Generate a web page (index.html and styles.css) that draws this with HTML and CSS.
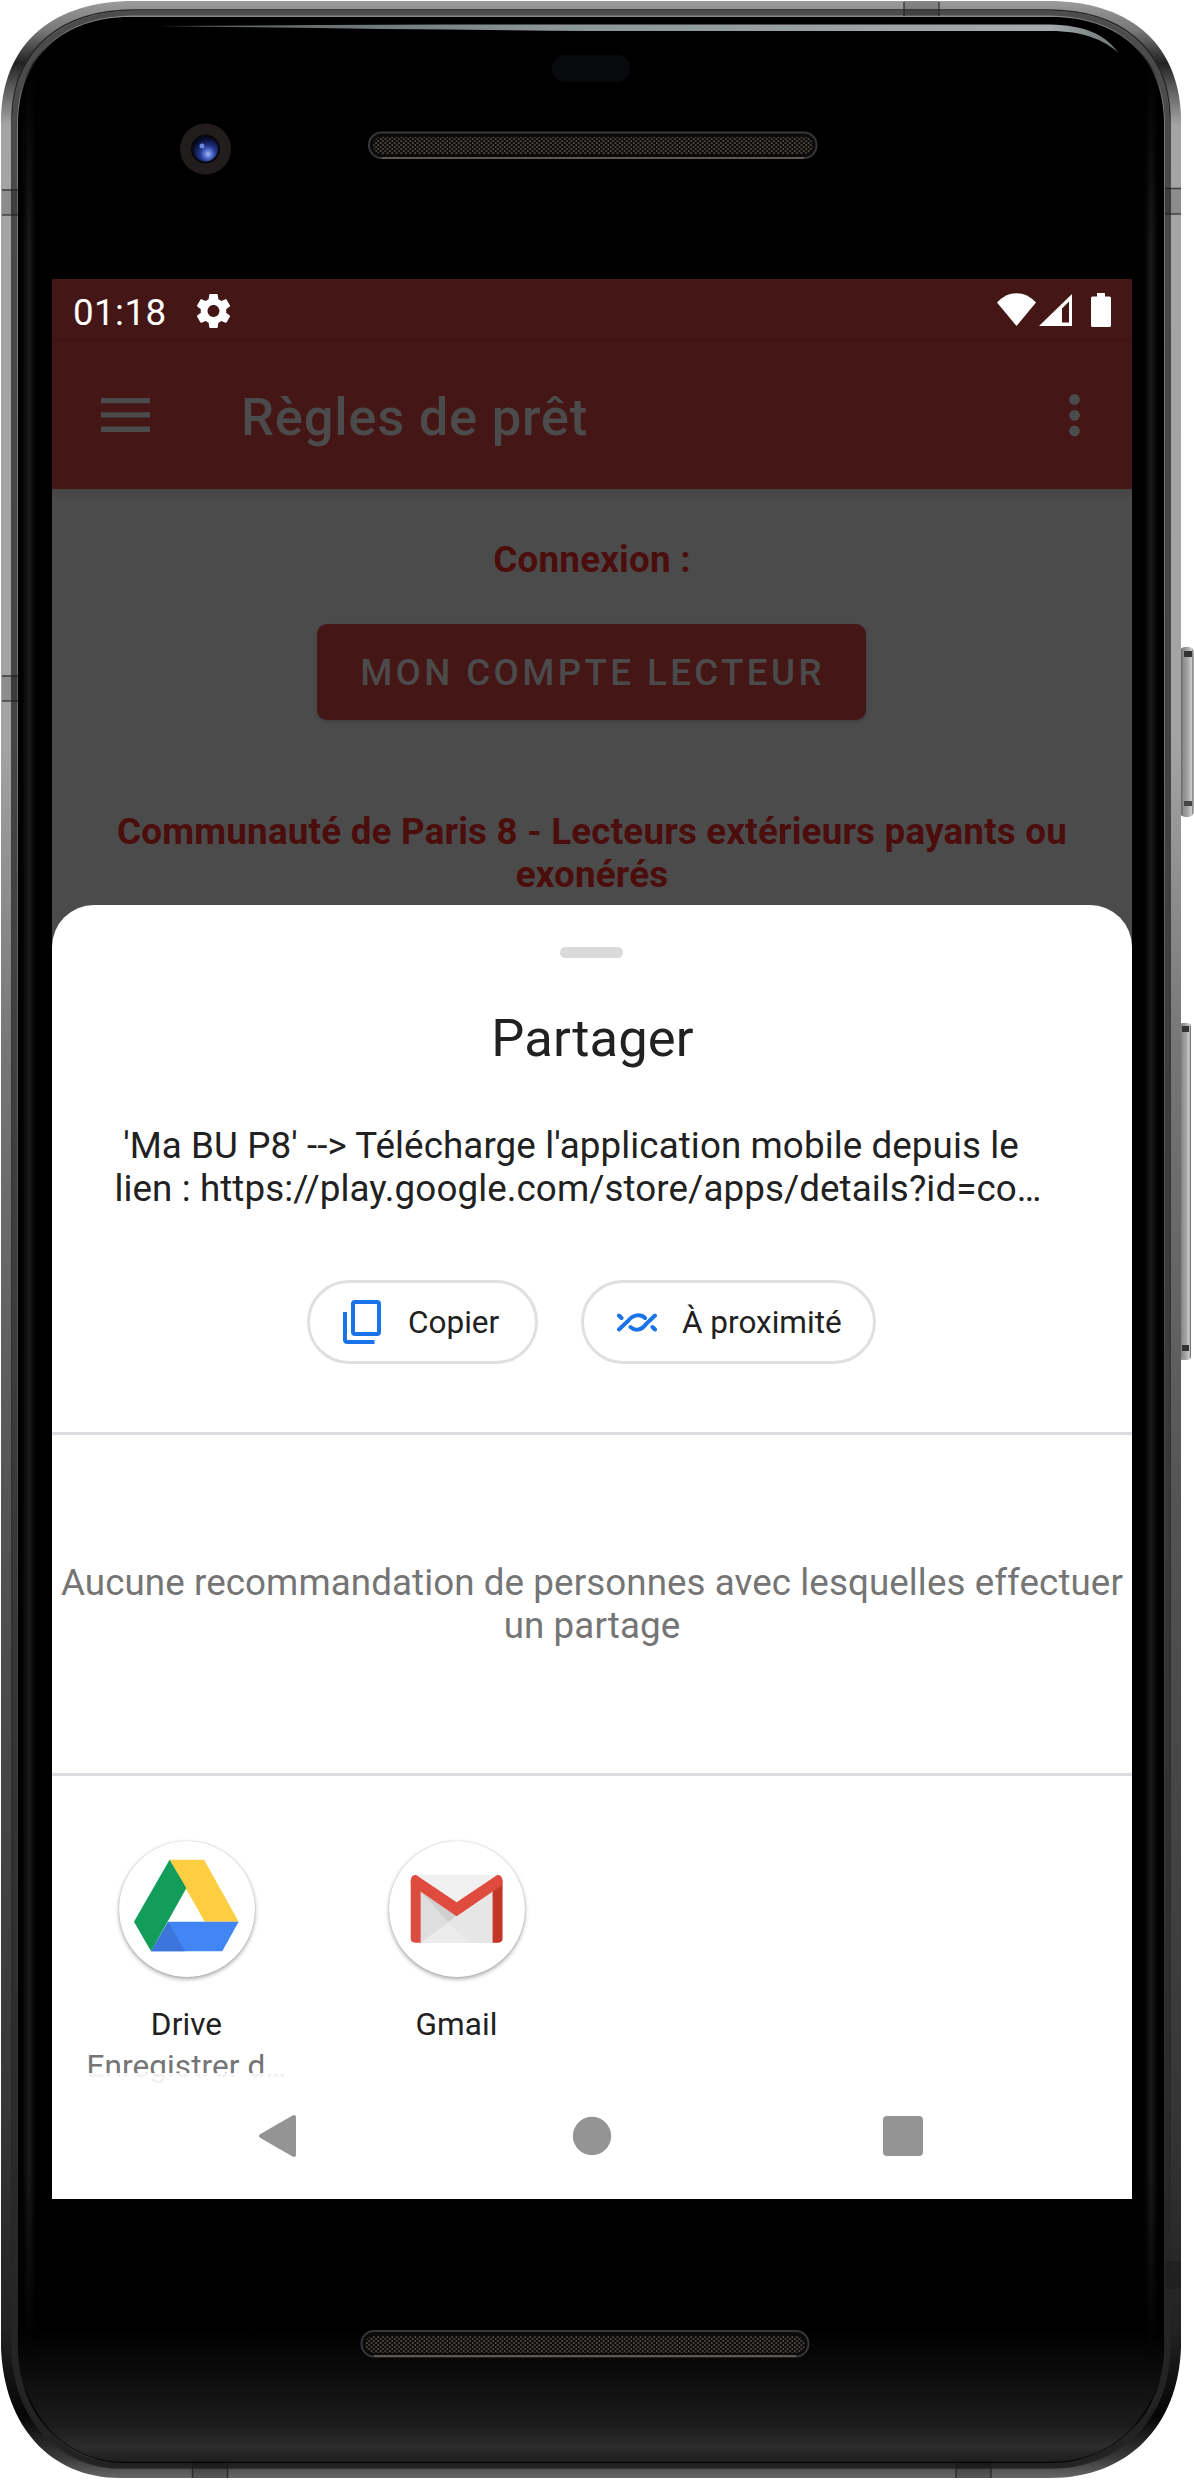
FILE: index.html
```html
<!DOCTYPE html>
<html lang="fr">
<head>
<meta charset="utf-8">
<title>Ma BU P8 – Partager</title>
<link rel="stylesheet" href="styles.css">
</head>
<body>
<main class="device">
  <svg class="hardware" width="1194" height="2480" viewBox="0 0 1194 2480" aria-hidden="true">
    <defs>
      <linearGradient id="rim" x1="0" y1="0" x2="0" y2="1">
        <stop offset="0" stop-color="#9a9b9a"/>
        <stop offset=".012" stop-color="#777"/>
        <stop offset=".025" stop-color="#222"/>
        <stop offset=".034" stop-color="#555"/>
        <stop offset=".05" stop-color="#a4a4a4"/>
        <stop offset=".3" stop-color="#a3a3a3"/>
        <stop offset=".42" stop-color="#777"/>
        <stop offset=".6" stop-color="#555"/>
        <stop offset=".85" stop-color="#363636"/>
        <stop offset=".94" stop-color="#222"/>
        <stop offset=".975" stop-color="#050505"/>
        <stop offset=".992" stop-color="#3a3a3a"/>
        <stop offset="1" stop-color="#666"/>
      </linearGradient>
      <linearGradient id="bevel" x1="0" y1="0" x2="0" y2="1">
        <stop offset="0" stop-color="#4c4c4c"/>
        <stop offset=".3" stop-color="#434343"/>
        <stop offset=".6" stop-color="#3a3a3a"/>
        <stop offset="1" stop-color="#222"/>
      </linearGradient>
      <linearGradient id="edge" x1="0" y1="0" x2="1" y2="0">
        <stop offset="0" stop-color="#191919" stop-opacity="0"/>
        <stop offset=".5" stop-color="#1b1b1b"/>
        <stop offset="1" stop-color="#191919" stop-opacity="0"/>
      </linearGradient>
      <linearGradient id="fade" x1="0" y1="60" x2="0" y2="2400" gradientUnits="userSpaceOnUse">
        <stop offset="0" stop-color="#fff" stop-opacity="0"/>
        <stop offset=".08" stop-color="#fff"/>
        <stop offset=".9" stop-color="#fff"/>
        <stop offset=".98" stop-color="#fff" stop-opacity="0"/>
      </linearGradient>
      <mask id="ends" maskUnits="userSpaceOnUse" x="0" y="0" width="1194" height="2480"><rect width="1194" height="2480" fill="url(#fade)"/></mask>
      <linearGradient id="chin" x1="0" y1="2330" x2="0" y2="2463" gradientUnits="userSpaceOnUse">
        <stop offset="0" stop-color="#000"/>
        <stop offset=".3" stop-color="#0b0b0b"/>
        <stop offset=".72" stop-color="#1c1c1c"/>
        <stop offset=".88" stop-color="#2d2d2d"/>
        <stop offset="1" stop-color="#1c1c1c"/>
      </linearGradient>
      <linearGradient id="glint" x1="158" y1="0" x2="1118" y2="0" gradientUnits="userSpaceOnUse">
        <stop offset="0" stop-color="#4f5757"/>
        <stop offset=".4" stop-color="#8b9596"/>
        <stop offset=".93" stop-color="#a4abac"/>
        <stop offset="1" stop-color="#6c7373"/>
      </linearGradient>
      <linearGradient id="key" x1="0" y1="0" x2="1" y2="0">
        <stop offset="0" stop-color="#555"/>
        <stop offset=".25" stop-color="#8c8c8c"/>
        <stop offset=".6" stop-color="#a6a6a6"/>
        <stop offset=".85" stop-color="#ccc"/>
        <stop offset="1" stop-color="#555"/>
      </linearGradient>
      <radialGradient id="lens" cx=".6" cy=".7" r=".65">
        <stop offset="0" stop-color="#a9bdf5"/>
        <stop offset=".22" stop-color="#5c78d2"/>
        <stop offset=".5" stop-color="#20348a"/>
        <stop offset="1" stop-color="#060a24"/>
      </radialGradient>
      <pattern id="mesh" width="4.6" height="4" patternUnits="userSpaceOnUse">
        <rect width="4.6" height="4" fill="#0d0c0b"/>
        <rect x=".4" y=".3" width="1.5" height="1.6" fill="#665f56"/>
        <rect x="2.7" y="2.3" width="1.5" height="1.6" fill="#665f56"/>
      </pattern>
    </defs>

    <rect x="1180" y="647" width="13.5" height="170" rx="5" fill="url(#key)"/>
    <rect x="1184" y="651" width="8" height="6" fill="#333"/>
    <rect x="1184" y="801" width="8" height="5" fill="#444"/>
    <rect x="1179" y="1023" width="12" height="337" rx="4" fill="url(#key)"/>
    <rect x="1182" y="1026" width="7" height="6" fill="#333"/>
    <rect x="1182" y="1345" width="7" height="6" fill="#333"/>

    <path fill="url(#rim)" d="M1 116C4 40 56 1 134 1H1048C1126 1 1178 40 1181 116V2348C1178 2426 1128 2478 1050 2478H120C50 2478 4 2426 1 2348Z"/>
    <path fill="none" stroke="#262626" stroke-width="1.5" d="M12 116C14 48 62 10 134 10H1048C1120 10 1168 48 1170 116V2348C1168 2420 1120 2468 1050 2468H120C60 2468 14 2420 12 2348Z"/>
    <path fill="none" stroke="url(#bevel)" stroke-width="5" d="M15 116C17 52 64 13 134 13H1048C1118 13 1165 52 1167 116V2348C1165 2417 1118 2465 1050 2465H120C62 2465 17 2417 15 2348Z"/>
    <path fill="#000" d="M18 120C20 56 64 17 130 17H1052C1118 17 1162 56 1164 120V2346C1162 2412 1116 2463 1050 2463H124C64 2463 20 2412 18 2346Z"/>
    <path fill="url(#chin)" d="M18 2320H1164V2346C1162 2412 1116 2462 1050 2462H124C64 2462 20 2412 18 2346Z"/>
    <g mask="url(#ends)">
      <rect x="22" y="60" width="14" height="2340" fill="url(#edge)"/>
      <rect x="1144" y="60" width="14" height="2340" fill="url(#edge)"/>
    </g>

    <g fill="#000" fill-opacity=".14">
      <path d="M2 189H18V215H2ZM2 675H18V701H2ZM1165 188H1181V214H1165ZM904 1H939V16H904ZM1165 2262H1181V2288H1165ZM192 2463H228V2478H192ZM956 2463H991V2478H956Z"/>
    </g>
    <path fill="none" stroke="#1c1c1c" stroke-opacity=".7" stroke-width="1.500" d="M2 190H18M2 215H18M2 676H18M2 701H18M1165 188.500H1181M1165 214H1181M904 2V16M939 2V16M1165 2262H1181M1165 2288H1181M192.500 2463V2478M227.500 2463V2478M956 2463V2478M991 2463V2478"/>

    <path fill="url(#glint)" d="M158 26C300 25 450 24.500 594 24.500H1050C1085 25 1106 35 1118.500 53C1104 40 1084 31 1050 31H594C450 30 300 28 158 26Z"/>
    <rect x="552" y="55" width="78" height="27" rx="13" fill="#08090d"/>

    <circle cx="205.500" cy="149" r="25.500" fill="#211d1d"/>
    <circle cx="205.500" cy="149" r="14.500" fill="#07070c"/>
    <circle cx="205.500" cy="149" r="12.500" fill="url(#lens)"/>
    <circle cx="202" cy="146" r="2.500" fill="#6d86dc"/>

    <rect x="369" y="132.500" width="447.500" height="25.500" rx="12.500" fill="#0b0b0b" stroke="#38363a" stroke-width="2"/>
    <path d="M382 158H804" stroke="#5c5752" stroke-width="2"/>
    <rect x="373" y="137" width="440" height="17" rx="8.500" fill="url(#mesh)"/>
    <rect x="361.500" y="2331" width="447" height="25.500" rx="12.500" fill="#0b0b0b" stroke="#38363a" stroke-width="2"/>
    <path d="M374 2356H796" stroke="#5c5752" stroke-width="2"/>
    <rect x="365" y="2336" width="440" height="17" rx="8.500" fill="url(#mesh)"/>
  </svg>

  <section class="screen">
    <header class="status">
      <span class="clock">01:18</span>
      <svg class="gear" width="33" height="34" viewBox="2.300 2 19.400 20" preserveAspectRatio="none" fill="#fff"><path d="M19.430 12.980c.04-.32.07-.64.07-.98s-.03-.66-.07-.98l2.110-1.650c.19-.15.24-.42.12-.64l-2-3.460c-.12-.22-.39-.3-.61-.22l-2.490 1c-.52-.4-1.080-.73-1.690-.98l-.38-2.650A.488.488 0 0 0 14 2h-4c-.25 0-.46.18-.49.42l-.38 2.650c-.61.25-1.170.59-1.690.98l-2.490-1c-.23-.09-.49 0-.61.22l-2 3.460c-.13.22-.07.49.12.64l2.110 1.650c-.04.32-.07.65-.07.98s.03.66.07.98l-2.110 1.650c-.19.15-.24.42-.12.64l2 3.460c.12.22.39.3.61.22l2.490-1c.52.4 1.080.73 1.690.98l.38 2.650c.03.24.24.42.49.42h4c.25 0 .46-.18.49-.42l.38-2.650c.61-.25 1.170-.59 1.690-.98l2.490 1c.23.09.49 0 .61-.22l2-3.460c.12-.22.07-.49-.12-.64l-2.110-1.650zM12 15.500c-1.930 0-3.500-1.570-3.500-3.500s1.570-3.500 3.500-3.500 3.500 1.570 3.500 3.500-1.570 3.500-3.500 3.500z"/></svg>
      <svg class="signals" width="115" height="35" viewBox="997 293 115 35" fill="#fff">
        <path d="M997 302.500C1008 290 1025 290 1036 302.500L1016.500 326Z"/>
        <path fill-rule="evenodd" d="M1072 294V326H1039ZM1069 301.500L1062 308.500V322.500H1069Z"/>
        <path d="M1097 293H1105V296.500H1109.500Q1111 296.500 1111 298V325.500Q1111 327 1109.500 327H1092.500Q1091 327 1091 325.500V298Q1091 296.500 1092.500 296.500H1097Z"/>
      </svg>
    </header>
    <div class="appbar">
      <svg class="menu" width="49" height="34" viewBox="0 0 49 34" fill="#4b4b4b"><path d="M0 0H49V5.300H0ZM0 14.300H49V19.600H0ZM0 28.600H49V34H0Z"/></svg>
      <h1 class="title">Règles de prêt</h1>
      <svg class="more" width="11" height="43" viewBox="0 0 11 43" fill="#4b4b4b"><circle cx="5.500" cy="5.500" r="5.400"/><circle cx="5.500" cy="21.300" r="5.400"/><circle cx="5.500" cy="37" r="5.400"/></svg>
    </div>
    <div class="content">
      <p class="red">Connexion :</p>
      <button class="account">MON COMPTE LECTEUR</button>
      <p class="red">Communauté de Paris 8 - Lecteurs extérieurs payants ou<br>exonérés</p>
    </div>
    <div class="sheet">
      <div class="handle"></div>
      <h2 class="share">Partager</h2>
      <p class="preview"><span class="line">'Ma BU P8' --&gt; Télécharge l'application mobile depuis le</span><span class="line last">lien : https://play.google.com/store/apps/details?id=co…</span></p>
      <div class="chips">
        <button class="chip copy">
          <svg width="38" height="44" viewBox="0 0 38 44" fill="none" stroke="#1a73e8" stroke-width="4"><rect x="10" y="2" width="26" height="32" rx="2"/><path d="M2 12V39.500Q2 42 4.500 42H31.500"/></svg>
          <span>Copier</span>
        </button>
        <button class="chip near">
          <svg width="40" height="19" viewBox="0 0 40 19" fill="none" stroke="#1a73e8" stroke-width="4" stroke-linecap="round"><path d="M2 16.500L11 8C16 1 24 1 28 5"/><path d="M38 2.500L29 11C24 18 18 18 13.500 14"/><path d="M2 2.500L4.500 5M38 16.500L35.500 14"/></svg>
          <span>À proximité</span>
        </button>
      </div>
      <div class="people"><p>Aucune recommandation de personnes avec lesquelles effectuer<br>un partage</p></div>
      <div class="apps">
        <div class="app">
          <svg class="logo" width="136" height="136" viewBox="219 124 382 408" preserveAspectRatio="none">
            <path fill="#fdce41" d="M361 180H458L555 366H460Z"/>
            <path fill="#4285f4" d="M357 366H555L509 455H309Z"/>
            <path fill="#3c76dc" d="M357 366L404 455H309Z"/>
            <path fill="#129e5a" d="M361 180L408 266L309 455L261 366Z"/>
            <path fill="#0e8a4c" opacity=".5" d="M361 180L408 266L402 262Z"/>
          </svg>
          <span class="name">Drive</span>
          <span class="sub">Enregistrer d…</span>
        </div>
        <div class="app">
          <svg class="logo" width="136" height="136" viewBox="975 124 382 408" preserveAspectRatio="none">
            <path fill="#f0f0f0" d="M1050 225H1280V429H1050Z"/>
            <path fill="#dedede" d="M1064 275L1165 348L1266 275V429H1064Z"/>
            <path fill="#cfcfcf" d="M1064 275L1165 348L1142 368Z"/>
            <path fill="#ececec" d="M1142 368L1200 429H1064Z"/>
            <path fill="#e6e6e6" d="M1165 348L1266 275V429H1200L1142 368Z"/>
            <path fill="#db4d41" d="M1036 242V416Q1036 429 1048 429H1064V262Z"/>
            <path fill="#c33729" d="M1294 242V416Q1294 429 1282 429H1266V262Z"/>
            <path fill="#e04b3f" d="M1036 243Q1037 225 1051 226L1165 308L1279 226Q1293 225 1294 243Q1294 255 1284 263L1165 350L1046 263Q1036 255 1036 243Z"/>
          </svg>
          <span class="name">Gmail</span>
        </div>
      </div>
    </div>
    <nav class="navbar">
      <svg width="1080" height="126" viewBox="0 0 1080 126" fill="#949494">
        <path stroke="#949494" stroke-width="4" stroke-linejoin="round" d="M242 44V82L209 63Z"/>
        <circle cx="540" cy="63" r="19.200"/>
        <rect x="831" y="43" width="40" height="40" rx="4"/>
      </svg>
    </nav>
  </section>
</main>
</body>
</html>
```
FILE: styles.css
```css
* { box-sizing: border-box; }
body { margin: 0; background: #fff; font-family: Roboto, sans-serif; font-size: 36.75px; line-height: 43px; }
h1, h2, p { margin: 0; font-weight: 400; }
svg { display: block; flex: none; }
button { font: inherit; border: 0; padding: 0; }

.device { display: grid; width: 1194px; height: 2480px; }
.hardware, .screen { grid-area: 1 / 1; }
.screen {
  position: relative;
  display: flex;
  flex-direction: column;
  width: 1080px;
  height: 1920px;
  margin: 279px 0 0 52px;
  background: #4b4b4b;
  overflow: hidden;
}

.status { display: flex; align-items: center; height: 63px; padding: 0 21px; background: #441616; color: #fff; }
.clock { padding-top: 4px; width: 124px; letter-spacing: .4px; white-space: nowrap; }
.signals { margin-left: auto; margin-right: -1px; }

.appbar { display: flex; align-items: center; height: 147px; padding: 0 52px 0 49px; background: #441616; color: #4b4b4b; box-shadow: 0 2px 10px rgba(0, 0, 0, .12); }
.menu { margin-bottom: 2px; }
.title { margin-left: 91px; padding-top: 3px; font-size: 52.5px; line-height: 62px; font-weight: 500; letter-spacing: .75px; white-space: nowrap; }
.more { margin-left: auto; }

.content { height: 416px; padding-top: 49px; display: flex; flex-direction: column; align-items: center; text-align: center; }
.red { color: #4c0d0d; font-weight: 700; letter-spacing: .21px; white-space: nowrap; }
.account { width: 549px; height: 96px; margin: 43px 1px 90px 0; padding: 1px 0 0 2px; border-radius: 10px; background: #441616; color: #4b4b4b; font-weight: 500; letter-spacing: 3.36px; box-shadow: 0 2px 4px rgba(0, 0, 0, .16); white-space: nowrap; }

.sheet { flex: 1; padding-top: 42px; border-radius: 42px 42px 0 0; background: #fff; color: #212121; display: flex; flex-direction: column; align-items: center; }
.handle { width: 63px; height: 11px; margin-right: 1px; border-radius: 6px; background: #dadada; }
.share { margin-top: 49px; padding-left: 1px; font-size: 52.5px; line-height: 62px; letter-spacing: .15px; }
.preview { display: flex; flex-direction: column; align-items: center; margin-top: 55px; letter-spacing: .09px; white-space: nowrap; }
.line { padding-right: 42px; }
.last { padding-right: 28px; }
.chips { display: flex; gap: 43px; margin: 70px 1px 68px 0; }
.chip { display: flex; align-items: center; height: 84px; border: 3px solid #e0e0e0; border-radius: 42px; background: #fff; color: #212121; font-size: 31.5px; white-space: nowrap; }
.copy { width: 231px; padding-left: 33px; gap: 27px; }
.near { width: 295px; padding-left: 33px; gap: 25px; }
.people { align-self: stretch; height: 344px; padding-top: 126px; border: solid #dadce0; border-width: 3px 0; color: #757575; letter-spacing: .08px; text-align: center; white-space: nowrap; }
.apps { align-self: stretch; display: grid; grid-template-columns: repeat(4, 270px); padding-top: 65px; }
.app { display: flex; flex-direction: column; align-items: center; padding-right: 1px; font-size: 31.5px; line-height: 37px; letter-spacing: .1px; white-space: nowrap; }
.logo { border-radius: 50%; box-shadow: 0 0 1px rgba(0, 0, 0, .25), 0 2px 4px rgba(0, 0, 0, .35); }
.name { margin-top: 29px; }
.sub { margin-top: 5px; color: #757575; }
.navbar { position: absolute; left: 0; bottom: 0; background: rgba(255, 255, 255, .9); }
```
